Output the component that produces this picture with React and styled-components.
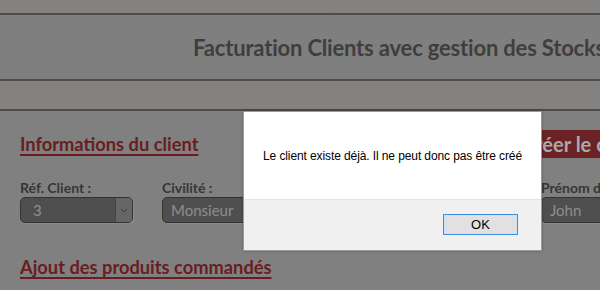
import React from "react";
import styled, { createGlobalStyle } from "styled-components";

const GlobalStyle = createGlobalStyle`
  html, body {
    margin: 0;
    padding: 0;
    background: #808080;
    overflow: hidden;
  }
  body {
    font-family: "Lato", "Open Sans", sans-serif;
  }
`;

const Page = styled.div`
  position: relative;
  width: 600px;
  height: 290px;
  overflow: hidden;
  background: #808080;
`;

const Strip = styled.div`
  height: ${(p) => p.h}px;
  background-color: #838281;
  background-image: radial-gradient(circle, rgba(150, 120, 110, 0.45) 0.8px, transparent 1.2px);
  background-size: 49px 16px;
  background-position: 10px 4px;
`;

const Header = styled.header`
  height: 64px;
  border-top: 2px solid #4c4c4c;
  border-bottom: 2px solid #4c4c4c;
  background: #7f7f7f;
  display: flex;
  align-items: center;
  padding-left: 193px;
  white-space: nowrap;
`;

const Title = styled.h1`
  margin: 0;
  font-size: 22px;
  font-weight: 700;
  color: #3e3e3e;
  letter-spacing: -0.18px;
`;

const Content = styled.main`
  border-top: 2px solid #4c4c4c;
  padding: 19px 0 0 20px;
  width: 700px;
`;

const SectionRow = styled.div`
  display: grid;
  grid-template-columns: 490px auto;
  align-items: center;
  height: 28px;
`;

const SectionTitle = styled.h2`
  margin: 0;
  font-size: 18.3px;
  font-weight: 700;
  color: #6a1d1f;
  text-decoration: underline;
  text-decoration-thickness: 2px;
  text-underline-offset: 3px;
  white-space: nowrap;
`;

const CreateButton = styled.button`
  justify-self: start;
  height: 28px;
  padding: 0 12px;
  border: none;
  background: #6b2224;
  color: #a9a9a9;
  font-family: inherit;
  font-size: 20px;
  font-weight: 700;
  white-space: nowrap;
`;

const Fields = styled.div`
  display: flex;
  gap: 29px;
  margin-top: 22px;
`;

const Field = styled.div`
  display: flex;
  flex-direction: column;
  width: ${(p) => p.w}px;
  flex-shrink: 0;
`;

const Label = styled.label`
  font-size: 14px;
  font-weight: 700;
  color: #363636;
  line-height: 16px;
  white-space: nowrap;
`;

const Box = styled.div`
  margin-top: 1px;
  height: 24px;
  border: 1px solid #333;
  border-radius: 5px;
  background: #4f4f4f;
  box-shadow: 1px 1px 0 rgba(160, 160, 160, 0.35);
  display: flex;
  align-items: stretch;
  overflow: hidden;
`;

const BoxText = styled.span`
  flex: 1;
  padding-left: ${(p) => p.pad}px;
  font-size: 15px;
  line-height: 24px;
  color: #8e8e8e;
`;

const Arrow = styled.span`
  width: 16px;
  background: #666;
  border-left: 1px solid #444;
  display: flex;
  align-items: center;
  justify-content: center;
`;

const Products = styled(SectionTitle)`
  margin-top: 33px;
`;

const Dialog = styled.div`
  position: absolute;
  left: 243px;
  top: 111px;
  width: 297px;
  height: 138px;
  background: #fff;
  border: 1px solid #9a9a9a;
  box-shadow: 0 0 3px rgba(0, 0, 0, 0.25);
  display: flex;
  flex-direction: column;
  font-family: "Liberation Sans", Arial, sans-serif;
`;

const Message = styled.div`
  height: 87px;
  padding-left: 19px;
  display: flex;
  align-items: center;
  font-size: 12px;
  letter-spacing: -0.1px;
  color: #000;
  white-space: nowrap;
`;

const Footer = styled.div`
  flex: 1;
  background: #f0f0f0;
  border-top: 1px solid #e4e4e4;
  display: flex;
  justify-content: flex-end;
  align-items: flex-start;
  padding: 14px 23px 0 0;
`;

const OkButton = styled.button`
  width: 75px;
  height: 21px;
  border: 1px solid #3d8ee0;
  background: #e1e1e1;
  box-shadow: inset 0 0 0 1px #cfe3f7;
  font-family: inherit;
  font-size: 13px;
  color: #000;
  padding: 0;
`;

const Chevron = () => (
  <svg width="8" height="5" viewBox="0 0 8 5">
    <path d="M1 1l3 3 3-3" fill="none" stroke="#3a3a3a" strokeWidth="1" />
  </svg>
);

export default function App() {
  return (
    <Page>
      <GlobalStyle />
      <Strip h={13} />
      <Header>
        <Title>Facturation Clients avec gestion des Stocks</Title>
      </Header>
      <Strip h={28} />
      <Content>
        <SectionRow>
          <SectionTitle>Informations du client</SectionTitle>
          <CreateButton>Créer le client</CreateButton>
        </SectionRow>
        <Fields>
          <Field w={113}>
            <Label>Réf. Client :</Label>
            <Box>
              <BoxText pad={12}>3</BoxText>
              <Arrow>
                <Chevron />
              </Arrow>
            </Box>
          </Field>
          <Field w={160}>
            <Label>Civilité :</Label>
            <Box>
              <BoxText pad={8}>Monsieur</BoxText>
            </Box>
          </Field>
          <Field w={161}>
            <Label>Nom :</Label>
            <Box>
              <BoxText pad={8}>Doe</BoxText>
            </Box>
          </Field>
          <Field w={160}>
            <Label>Prénom du client :</Label>
            <Box>
              <BoxText pad={8}>John</BoxText>
            </Box>
          </Field>
        </Fields>
        <Products>Ajout des produits commandés</Products>
      </Content>
      <Dialog role="alertdialog">
        <Message>Le client existe déjà. Il ne peut donc pas être créé</Message>
        <Footer>
          <OkButton>OK</OkButton>
        </Footer>
      </Dialog>
    </Page>
  );
}
